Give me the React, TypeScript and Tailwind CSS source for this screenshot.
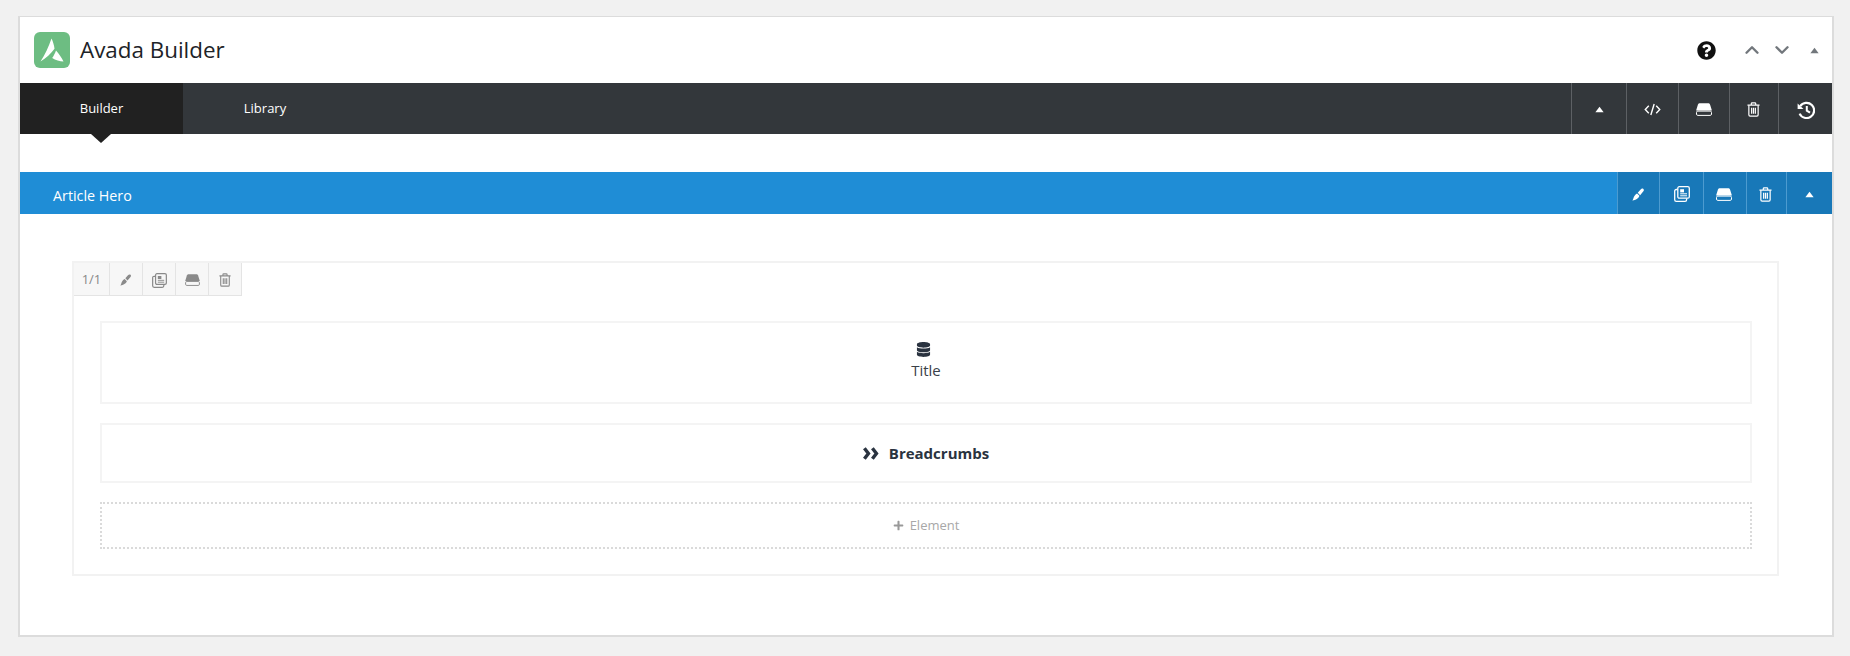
import type { ReactNode } from "react";
import { FaDatabase, FaQuestionCircle, FaPlus } from "react-icons/fa";
import { LuChevronUp, LuChevronDown } from "react-icons/lu";

function Caret({ className }: { className: string }) {
  return (
    <svg viewBox="0 0 10 7" className={className} fill="currentColor">
      <path d="M5 0.5 9.6 6.5H0.4Z" />
    </svg>
  );
}

function DriveIcon({ className }: { className: string }) {
  return (
    <svg viewBox="0 0 16 13" className={className} fill="none">
      <path d="M4 0.300h8c1 0 1.700.5 2.100 1.400L15.900 7.500H.1L1.900 1.700C2.300.8 3 .3 4 .3Z" fill="currentColor" />
      <path d="M1.800 8.100h12.400c.8 0 1.300.5 1.300 1.300v1.700c0 .8-.5 1.300-1.300 1.300H1.800c-.8 0-1.300-.5-1.300-1.300V9.400c0-.8.500-1.300 1.300-1.300Z" stroke="currentColor" strokeWidth="1" />
    </svg>
  );
}

function TrashIcon({ className }: { className: string }) {
  return (
    <svg viewBox="0 0 14 16" className={className} fill="none" stroke="currentColor" strokeWidth="1.300">
      <path d="M0.500 3.200h13M4.600 3V1.700c0-.5.400-.9.900-.9h3c.5 0 .9.400.9.900V3" />
      <path d="M2 3.400v10.300c0 .8.500 1.500 1.300 1.500h7.400c.8 0 1.300-.7 1.300-1.500V3.400" />
      <path d="M5 6v6.600M7 6v6.600M9 6v6.600" />
    </svg>
  );
}

function CopyIcon({ className }: { className: string }) {
  return (
    <svg viewBox="0 0 16 16" className={className} fill="none" stroke="currentColor" strokeWidth="1.300">
      <rect x="3.800" y="0.700" width="11.500" height="11.500" rx="1.500" />
      <path d="M3.600 3.500H2.300C1.300 3.500.7 4.100.7 5v8.700c0 .9.600 1.600 1.600 1.600H11c.9 0 1.600-.7 1.600-1.600v-1.300" />
      <path d="M6.200 3.200h3.800v3.200H6.200Z" fill="currentColor" stroke="none" />
      <path d="M6.200 7.800h6.800M6.200 9.800h6.800" strokeWidth="1" />
    </svg>
  );
}

function BrushIcon({ className }: { className: string }) {
  return (
    <svg viewBox="0 0 14 14" className={className} fill="currentColor">
      <path d="M9.300 1.500c.8-.9 2-1.300 3-.5.900.9.500 2-.3 2.900L8.800 7.700 6.200 5.100Z" />
      <path d="M5.500 5.800 8 8.400c-.2.900-.7 1.700-1.500 2.400-1.600 1.500-3.900 2.400-6.200 2.600 1.100-1 1.100-2.500 1.700-3.700.7-1.600 2-3.300 3.500-3.900Z" />
    </svg>
  );
}

function CodeIcon({ className }: { className: string }) {
  return (
    <svg viewBox="0 0 18 14" className={className} fill="none" stroke="currentColor" strokeWidth="1.500">
      <path d="M5 3 1.200 7 5 11M13 3l3.800 4L13 11M10.800 1 7.200 13" />
    </svg>
  );
}

function HistoryIcon({ className }: { className: string }) {
  return (
    <svg viewBox="0 0 18 18" className={className} fill="none" stroke="currentColor" strokeWidth="2.200">
      <path d="M3.200 5.200A7.600 7.600 0 1 1 2.600 12.600" />
      <path d="M0.600 2.600 6.500 8H0.600Z" fill="currentColor" stroke="none" />
      <path d="M9.800 5v4.600l3.200 2" strokeWidth="2" />
    </svg>
  );
}

function ToolCell({ width, children, border }: { width: string; children: ReactNode; border: string }) {
  return <div className={`flex h-full items-center justify-center border-l ${width} ${border}`}>{children}</div>;
}

export default function App() {
  return (
    <div className="h-[656px] w-[1850px] overflow-hidden bg-[#f1f1f1] pl-[18px] pt-4 font-['Open_Sans',sans-serif]">
      <div className="h-[621px] w-[1816px] border border-[#dcdcdc] border-b-2 border-l-2 border-r-2 bg-white">
        <header className="flex h-[66px] items-center pl-[14px]">
          <div className="flex size-9 items-center justify-center rounded-[6px] bg-[#6dbd82]">
            <svg viewBox="0 0 24 24" className="size-[24px]" fill="#fff">
              <path d="M11.500 0.500c1.600 3.500 2.700 7 3 10.300C11 15.500 6 20.500 0.500 23.500 5 17 8.500 9 11.500 0.500Z" />
              <path d="M16 12.500c2.900 3.300 5.500 7 7.500 11-3.700-.1-8-1.100-11.300-3.500 1.700-2.500 2.900-4.800 3.800-7.500Z" />
            </svg>
          </div>
          <h1 className="ml-[10px] text-[22.400px] font-normal text-[#1d2327]">Avada Builder</h1>
          <div className="ml-auto flex items-center pr-[13px] text-[#72777c]">
            <FaQuestionCircle className="size-[19px] text-[#111]" />
            <LuChevronUp className="ml-[25px] size-[22px]" strokeWidth={2.600} />
            <LuChevronDown className="ml-[8px] size-[22px]" strokeWidth={2.600} />
            <Caret className="ml-[17px] size-[9px]" />
          </div>
        </header>

        <nav className="flex h-[51px] bg-[#33373b] text-white">
          <div className="relative flex w-[163px] items-center justify-center bg-[#212121] pt-[1px] text-[13px] font-medium">
            Builder
            <span className="absolute left-[71px] top-full h-0 w-0 border-x-[10px] border-t-[9px] border-x-transparent border-t-[#212121]" />
          </div>
          <div className="flex w-[164px] items-center justify-center pt-[1px] text-[13px] font-medium">Library</div>
          <div className="ml-auto flex h-full">
            <ToolCell width="w-[55px]" border="border-[#5d6064]"><Caret className="mt-[2px] size-[9px]" /></ToolCell>
            <ToolCell width="w-[52px]" border="border-[#5d6064]"><CodeIcon className="mt-[2px] h-[13px] w-[17px]" /></ToolCell>
            <ToolCell width="w-[51px]" border="border-[#5d6064]"><DriveIcon className="mt-[2px] h-[13px] w-[16px]" /></ToolCell>
            <ToolCell width="w-[49px]" border="border-[#5d6064]"><TrashIcon className="-ml-[2px] mt-[2px] h-[15px] w-[13px]" /></ToolCell>
            <ToolCell width="w-[54px]" border="border-[#5d6064]"><HistoryIcon className="mt-[2px] size-[18px]" /></ToolCell>
          </div>
        </nav>

        <section className="mt-[38px] flex h-[42px] items-center bg-[#1f8dd6] text-white">
          <span className="pl-[33px] pt-[5px] text-[14.300px]">Article Hero</span>
          <div className="ml-auto flex h-full bg-[#1878b8]">
            <ToolCell width="w-[42px]" border="border-[#4c9bd0]"><BrushIcon className="mt-[2px] size-[13px]" /></ToolCell>
            <ToolCell width="w-[44px]" border="border-[#4c9bd0]"><CopyIcon className="mt-[2px] size-[16px]" /></ToolCell>
            <ToolCell width="w-[43px]" border="border-[#4c9bd0]"><DriveIcon className="-ml-[2px] mt-[2px] h-[13px] w-[16px]" /></ToolCell>
            <ToolCell width="w-[40px]" border="border-[#4c9bd0]"><TrashIcon className="-ml-[2px] mt-[2px] h-[15px] w-[13px]" /></ToolCell>
            <ToolCell width="w-[46px]" border="border-[#4c9bd0]"><Caret className="mt-[2px] size-[9px]" /></ToolCell>
          </div>
        </section>

        <div className="ml-[52px] mr-[53px] mt-[47px] h-[315px] border-2 border-[#f2f2f2]">
          <div className="flex h-[33px] w-fit border-b border-r border-[#e4e4e4] bg-[#f7f7f7] text-[#8a8a8a]">
            <div className="flex w-[35px] items-center justify-center pt-[2px] text-[13px] text-[#888]">1/1</div>
            <ToolCell width="w-[33px]" border="border-[#e4e4e4]"><BrushIcon className="mt-[2px] size-[12px]" /></ToolCell>
            <ToolCell width="w-[33px]" border="border-[#e4e4e4]"><CopyIcon className="mt-[2px] size-[15px]" /></ToolCell>
            <ToolCell width="w-[33px]" border="border-[#e4e4e4]"><DriveIcon className="mt-[2px] h-[12px] w-[15px]" /></ToolCell>
            <ToolCell width="w-[33px]" border="border-[#e4e4e4]"><TrashIcon className="mt-[2px] h-[14px] w-[12px]" /></ToolCell>
          </div>

          <div className="ml-[26px] mr-[25px] mt-[25px] flex flex-col gap-[19px]">
            <div className="flex h-[83px] flex-col items-center justify-center border-2 border-[#f4f4f4] pb-[3px] text-[#3a4149]">
              <FaDatabase className="mb-[3px] mr-[5px] size-[15px] text-[#2a3340]" />
              <span className="text-[15px] leading-[20px]">Title</span>
            </div>
            <div className="flex h-[60px] items-center justify-center border-2 border-[#f4f4f4] text-[#2a3340]">
              <svg viewBox="0 0 15 12" className="h-[13px] w-[16px]" fill="none" stroke="currentColor" strokeWidth="3.200">
                <path d="M1.300 1l3.800 5-3.800 5M8.800 1l3.800 5-3.800 5" />
              </svg>
              <span className="ml-[10px] text-[15px] font-bold">Breadcrumbs</span>
            </div>
            <div className="flex h-[47px] items-center justify-center border-2 border-dotted border-[#dadada] text-[#a8a8a8]">
              <FaPlus className="size-[11px] text-[#999]" />
              <span className="ml-[6px] text-[13px]">Element</span>
            </div>
          </div>
        </div>
      </div>
    </div>
  );
}
